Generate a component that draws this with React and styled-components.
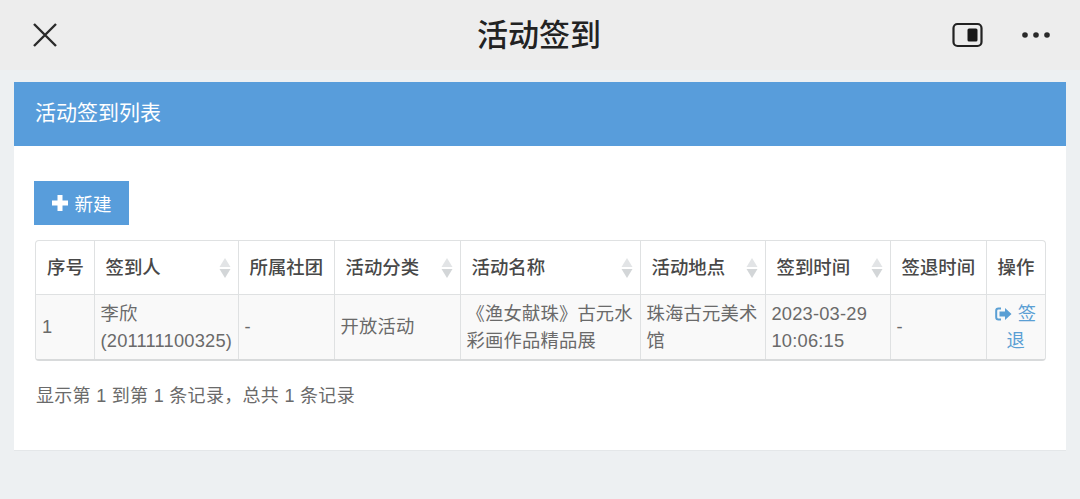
import styled, { createGlobalStyle } from "styled-components";

const GlobalStyle = createGlobalStyle`
  html, body {
    margin: 0;
    padding: 0;
    background: #edf0f2;
    font-family: "Liberation Sans", "Noto Sans CJK SC", sans-serif;
  }
`;

const Page = styled.div`
  width: 1080px;
  height: 499px;
  overflow: hidden;
  display: flex;
  flex-direction: column;
`;

const NavBar = styled.div`
  height: 70px;
  flex-shrink: 0;
  background: #ededed;
  display: flex;
  align-items: center;
  justify-content: space-between;
  padding: 0 30px 0 32px;
  position: relative;
`;

const NavTitle = styled.div`
  position: absolute;
  left: 0;
  right: 0;
  top: 15px;
  text-align: center;
  font-size: 31px;
  line-height: 42px;
  font-weight: 500;
  color: #222;
  padding-right: 2px;
`;

const NavRight = styled.div`
  display: flex;
  align-items: center;
  gap: 38px;
`;

const Body = styled.div`
  flex: 1;
  padding: 12px 14px 0;
`;

const Panel = styled.div`
  height: 368px;
  background: #fff;
  border-bottom: 1px solid #e4e7e9;
`;

const PanelHeading = styled.div`
  height: 64px;
  background: #589ddb;
  color: #fff;
  font-size: 21px;
  line-height: 62px;
  padding-left: 21px;
`;

const PanelBody = styled.div`
  padding: 35px 20px 0 20px;
`;

const NewButton = styled.div`
  width: 95px;
  height: 44px;
  background: #589ddb;
  color: #fff;
  font-size: 18.5px;
  display: flex;
  align-items: center;
  justify-content: center;
  gap: 5px;
  box-sizing: border-box;
`;

const TableWrap = styled.div`
  margin: 15px 0 0 1px;
  width: 1011px;
  border: 1px solid #dfe1e2;
  border-bottom: 2px solid #d8dadb;
  border-radius: 4px;
  box-sizing: border-box;
  overflow: hidden;
`;

const Table = styled.table`
  width: 100%;
  table-layout: fixed;
  border-collapse: collapse;
`;

const HeadCell = styled.th`
  height: 53px;
  padding: 0 11px 3px;
  box-sizing: border-box;
  font-size: 18.4px;
  font-weight: 500;
  color: #484848;
  text-align: left;
  white-space: nowrap;
  border-left: 1px solid #dfe1e2;
  border-bottom: 1px solid #dfe1e2;
  position: relative;
  &:first-child { border-left: 0; }
`;

const SortMark = styled.svg`
  position: absolute;
  right: 7px;
  top: 17px;
`;

const Cell = styled.td`
  height: 64px;
  padding: ${({ $center }) => ($center ? "0 6px 0 4px" : "0 4px 0 6px")};
  background: #f9f9f9;
  font-size: 18.3px;
  line-height: 27px;
  letter-spacing: 0.2px;
  color: #6a6a6a;
  border-left: 1px solid #dfe1e2;
  text-align: ${({ $center }) => ($center ? "center" : "left")};
  &:first-child { border-left: 0; }
`;

const SignOut = styled.span`
  color: #5a9fd4;
`;

const Summary = styled.div`
  margin: 23px 0 0 2px;
  font-size: 18px;
  line-height: 24px;
  color: #6a6a6a;
  letter-spacing: 0.3px;
`;

const columns = [
  { name: "序号", width: 58 },
  { name: "签到人", width: 144, sort: true },
  { name: "所属社团", width: 96 },
  { name: "活动分类", width: 126, sort: true },
  { name: "活动名称", width: 180, sort: true },
  { name: "活动地点", width: 125, sort: true },
  { name: "签到时间", width: 125, sort: true },
  { name: "签退时间", width: 96 },
  { name: "操作", width: 61 },
];

function CloseIcon() {
  return (
    <svg width="26" height="26" viewBox="0 0 26 26">
      <path d="M2 2 L24 24 M24 2 L2 24" stroke="#2a2a2a" strokeWidth="2.4" fill="none" />
    </svg>
  );
}

function FloatIcon() {
  return (
    <svg width="32" height="26" viewBox="0 0 32 26">
      <rect x="1.5" y="2" width="28" height="22" rx="4" fill="none" stroke="#222" strokeWidth="2.2" />
      <rect x="15.5" y="6.5" width="10" height="13" rx="1.5" fill="#1a1a1a" />
    </svg>
  );
}

function MoreIcon() {
  return (
    <svg width="28" height="6" viewBox="0 0 28 6">
      <circle cx="3" cy="3" r="2.8" fill="#2a2a2a" />
      <circle cx="14" cy="3" r="2.8" fill="#2a2a2a" />
      <circle cx="25" cy="3" r="2.8" fill="#2a2a2a" />
    </svg>
  );
}

function PlusIcon() {
  return (
    <svg width="18" height="18" viewBox="0 0 18 18">
      <path d="M6.5 1 h5 v5.5 h5.5 v5 h-5.5 v5.5 h-5 v-5.5 h-5.5 v-5 h5.5 z" fill="#fff" />
    </svg>
  );
}

function SortIcon() {
  return (
    <SortMark width="12" height="20" viewBox="0 0 12 20">
      <path d="M6 0 L11.5 9 H0.5 Z" fill="#e2e4e6" />
      <path d="M6 20 L11.5 11 H0.5 Z" fill="#d3d6d8" />
    </SortMark>
  );
}

function SignOutIcon() {
  return (
    <svg width="17" height="14" viewBox="0 0 17 14" style={{ verticalAlign: "-1px" }}>
      <path d="M6 1.5 H3.5 Q1.2 1.5 1.2 3.8 V10.2 Q1.2 12.5 3.5 12.5 H6" fill="none" stroke="#5a9fd4" strokeWidth="2" />
      <path d="M10 1 L16.5 7 L10 13 V9.5 H4.5 V4.5 H10 Z" fill="#5a9fd4" />
    </svg>
  );
}

export default function App() {
  return (
    <Page>
      <GlobalStyle />
      <NavBar>
        <NavTitle>活动签到</NavTitle>
        <CloseIcon />
        <NavRight>
          <FloatIcon />
          <MoreIcon />
        </NavRight>
      </NavBar>
      <Body>
        <Panel>
          <PanelHeading>活动签到列表</PanelHeading>
          <PanelBody>
            <NewButton>
              <PlusIcon />
              新建
            </NewButton>
            <TableWrap>
              <Table>
                <colgroup>
                  {columns.map((col) => (
                    <col key={col.name} style={{ width: col.width }} />
                  ))}
                </colgroup>
                <thead>
                  <tr>
                    {columns.map((col) => (
                      <HeadCell key={col.name}>
                        {col.name}
                        {col.sort && <SortIcon />}
                      </HeadCell>
                    ))}
                  </tr>
                </thead>
                <tbody>
                  <tr>
                    <Cell>1</Cell>
                    <Cell>李欣 (201111100325)</Cell>
                    <Cell>-</Cell>
                    <Cell>开放活动</Cell>
                    <Cell>《渔女献珠》古元水彩画作品精品展</Cell>
                    <Cell>珠海古元美术馆</Cell>
                    <Cell>2023-03-29 10:06:15</Cell>
                    <Cell>-</Cell>
                    <Cell $center>
                      <SignOut>
                        <SignOutIcon /> 签退
                      </SignOut>
                    </Cell>
                  </tr>
                </tbody>
              </Table>
            </TableWrap>
            <Summary>显示第 1 到第 1 条记录，总共 1 条记录</Summary>
          </PanelBody>
        </Panel>
      </Body>
    </Page>
  );
}
